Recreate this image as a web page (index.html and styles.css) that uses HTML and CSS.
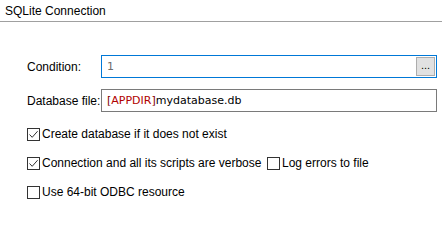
FILE: index.html
```html
<!DOCTYPE html>
<html>
<head>
<meta charset="utf-8">
<link rel="stylesheet" href="styles.css">
</head>
<body>
<div class="panel">
  <div class="title">SQLite Connection</div>
  <div class="form">
    <div class="row">
      <label class="lbl">Condition:</label>
      <div class="input focus">
        <span class="val gray">1</span>
        <button class="btn">...</button>
      </div>
    </div>
    <div class="row r2">
      <label class="lbl">Database file:</label>
      <div class="input">
        <span class="val"><span class="br">[</span><span class="var">APPDIR</span><span class="br">]</span>mydatabase.db</span>
      </div>
    </div>
    <div class="checks">
      <div class="chk-line">
        <label class="chk"><span class="box on"><svg viewBox="0 0 13 13" width="13" height="13"><path d="M2.5 6.5 L5.2 9.3 L10.6 3.2" fill="none" stroke="#333" stroke-width="1"/></svg></span>Create database if it does not exist</label>
      </div>
      <div class="chk-line">
        <label class="chk first"><span class="box on"><svg viewBox="0 0 13 13" width="13" height="13"><path d="M2.5 6.5 L5.2 9.3 L10.6 3.2" fill="none" stroke="#333" stroke-width="1"/></svg></span>Connection and all its scripts are verbose</label>
        <label class="chk"><span class="box"></span>Log errors to file</label>
      </div>
      <div class="chk-line">
        <label class="chk"><span class="box"></span>Use 64-bit ODBC resource</label>
      </div>
    </div>
  </div>
</div>
</body>
</html>
```
FILE: styles.css
```css
html, body {
  margin: 0;
  padding: 0;
  background: #ffffff;
}
.panel {
  width: 442px;
  height: 249px;
  font-family: "Liberation Sans", Arial, sans-serif;
  font-size: 12px;
  color: #000;
}
.title {
  height: 22px;
  box-sizing: border-box;
  padding: 4px 0 0 5px;
  border-bottom: 1px solid #a0a0a0;
  line-height: 15px;
}
.form {
  padding: 33px 5px 0 27px;
}
.row {
  display: flex;
  align-items: center;
}
.r2 {
  margin-top: 11px;
}
.lbl {
  width: 74px;
  flex: none;
  white-space: nowrap;
}
.input {
  box-sizing: border-box;
  width: 336px;
  height: 23px;
  border: 1px solid #7a7a7a;
  display: flex;
  align-items: center;
  padding: 0 1px 0 5px;
  font-family: "DejaVu Sans", sans-serif;
  font-size: 11px;
}
.input.focus {
  border-color: #0078d7;
}
.val {
  flex: 1;
  white-space: nowrap;
}
.gray { color: #6d6d6d; }
.br { color: #800000; }
.var { color: #b00000; }
.btn {
  box-sizing: border-box;
  width: 19px;
  height: 19px;
  margin: 0;
  padding: 0 0 4px 0;
  border: 1px solid #adadad;
  background: #e1e1e1;
  font-family: "Liberation Sans", sans-serif;
  font-size: 11px;
  line-height: 12px;
  color: #000;
}
.checks {
  margin-top: 15px;
  display: flex;
  flex-direction: column;
  gap: 15px;
}
.chk-line {
  display: flex;
  align-items: center;
  height: 14px;
}
.chk {
  display: flex;
  align-items: center;
  white-space: nowrap;
}
.first {
  width: 240px;
}
.box {
  box-sizing: border-box;
  width: 13px;
  height: 13px;
  border: 1px solid #333;
  background: #fff;
  margin-right: 2px;
  display: inline-block;
  position: relative;
  flex: none;
}
.box svg {
  position: absolute;
  left: -1px;
  top: -1px;
}
```
